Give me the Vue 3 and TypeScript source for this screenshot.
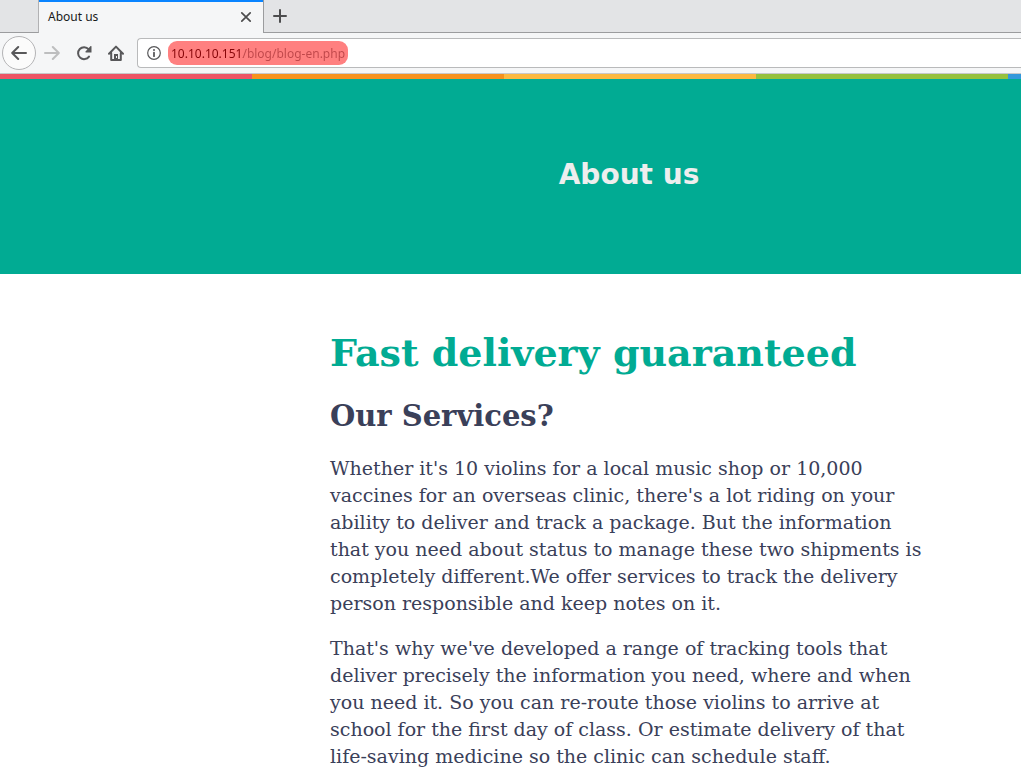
<script setup lang="ts">
import { ref } from 'vue'

const address = ref('10.10.10.151/blog/blog-en.php')
const stripes: string[] = ['red', 'orange', 'yellow', 'green', 'blue']
const paragraphs: string[] = [
  "Whether it's 10 violins for a local music shop or 10,000 vaccines for an overseas clinic, there's a lot riding on your ability to deliver and track a package. But the information that you need about status to manage these two shipments is completely different.We offer services to track the delivery person responsible and keep notes on it.",
  "That's why we've developed a range of tracking tools that deliver precisely the information you need, where and when you need it. So you can re-route those violins to arrive at school for the first day of class. Or estimate delivery of that life-saving medicine so the clinic can schedule staff.",
]
</script>

<template>
  <div class="browser">
    <div class="tabs">
      <div class="tab-gap"></div>
      <div class="tab">
        <span class="tab-title">About us</span>
        <button class="tab-close" type="button" aria-label="Close tab">
          <svg width="12" height="12" viewBox="0 0 12 12"><path d="M1.8 1.8l8.4 8.4M10.2 1.8l-8.4 8.4" fill="none" stroke="#4c4c4d" stroke-width="1.7" stroke-linecap="round" /></svg>
        </button>
      </div>
      <div class="tab-rest">
        <button class="tab-new" type="button" aria-label="New tab">
          <svg width="14" height="14" viewBox="0 0 14 14"><path d="M7 1v12M1 7h12" fill="none" stroke="#4c4c4d" stroke-width="2" stroke-linecap="round" /></svg>
        </button>
      </div>
    </div>

    <div class="toolbar">
      <button class="nav back" type="button" aria-label="Back">
        <svg width="16" height="16" viewBox="0 0 16 16"><path d="M15 8H1.5M7.2 2L1.2 8l6 6" fill="none" stroke="#58585a" stroke-width="2" stroke-linecap="round" stroke-linejoin="round" /></svg>
      </button>
      <button class="nav" type="button" aria-label="Forward" disabled>
        <svg width="16" height="16" viewBox="0 0 16 16"><path d="M1 8h13.5M8.8 2l6 6-6 6" fill="none" stroke="#bdbebf" stroke-width="2" stroke-linecap="round" stroke-linejoin="round" /></svg>
      </button>
      <button class="nav" type="button" aria-label="Reload">
        <svg width="16" height="16" viewBox="0 0 16 16">
          <path d="M13 11.6A6 6 0 1 1 12.6 4.2" fill="none" stroke="#58585a" stroke-width="2" stroke-linecap="round" />
          <path d="M14.6 1.1a.6.6 0 0 1 .9.5V7.4H9.9a.6.6 0 0 1-.4-1z" fill="#58585a" />
        </svg>
      </button>
      <button class="nav" type="button" aria-label="Home">
        <svg width="16" height="16" viewBox="0 0 16 16">
          <path d="M1 8.8L8 1.6l7 7.2M3.2 8v7h9.6V8" fill="none" stroke="#58585a" stroke-width="2" stroke-linecap="round" stroke-linejoin="round" />
          <path d="M6 15V9h4v6z" fill="#58585a" />
          <path d="M8 11h1v2H8z" fill="#f5f6f7" />
        </svg>
      </button>
      <div class="urlbar">
        <svg width="14" height="14" viewBox="0 0 14 14">
          <circle cx="7" cy="7" r="6.3" fill="none" stroke="#58585a" stroke-width="1.2" />
          <path d="M7 6.7v3.5" stroke="#58585a" stroke-width="1.8" stroke-linecap="round" />
          <circle cx="7" cy="4" r="1" fill="#58585a" />
        </svg>
        <label class="address">
          <input v-model="address" class="address-input" type="text" aria-label="Address" spellcheck="false" />
        </label>
      </div>
    </div>

    <div class="stripes">
      <div v-for="stripe in stripes" :key="stripe" class="stripe" :class="stripe"></div>
    </div>

    <header class="banner">
      <h2 class="banner-title">About us</h2>
    </header>

    <main class="article">
      <h1 class="headline">Fast delivery guaranteed</h1>
      <h2 class="subhead">Our Services?</h2>
      <p v-for="(text, index) in paragraphs" :key="index" class="copy">{{ text }}</p>
    </main>
  </div>
</template>

<style>
body {
  margin: 0;
  background: #fff;
}
</style>

<style scoped>
.browser {
  height: 100vh;
  overflow: hidden;
  font-family: 'Noto Sans', sans-serif;
}
button {
  display: flex;
  align-items: center;
  justify-content: center;
  padding: 0;
  border: 0;
  background: none;
}
.tabs {
  display: flex;
  height: 33px;
  background: #e3e4e6;
}
.tab-gap {
  box-sizing: border-box;
  width: 39px;
  border-right: 1px solid #b1b1b3;
  border-bottom: 1px solid #9b9c9e;
}
.tab {
  box-sizing: border-box;
  display: flex;
  align-items: center;
  justify-content: space-between;
  width: 224px;
  padding: 0 10px 2px 9px;
  border-top: 2px solid #0a84ff;
  background: #f5f6f7;
}
.tab-title {
  font-size: 12px;
  line-height: 16px;
  color: #18191a;
}
.tab-close {
  width: 14px;
  height: 14px;
}
.tab-rest {
  box-sizing: border-box;
  flex: 1;
  display: flex;
  align-items: center;
  padding-left: 9px;
  border-left: 1px solid #9b9c9e;
  border-bottom: 1px solid #9b9c9e;
}
.tab-new {
  width: 14px;
  height: 14px;
}
.toolbar {
  display: flex;
  align-items: center;
  height: 40px;
  padding-left: 2px;
  border-bottom: 1px solid #c8c8ca;
  background: #f5f6f7;
}
.nav {
  flex: none;
  width: 32px;
  height: 32px;
}
.back {
  box-sizing: border-box;
  width: 34px;
  height: 34px;
  border: 1px solid #b4b4b6;
  border-radius: 50%;
  background: #fbfbfb;
}
.urlbar {
  box-sizing: border-box;
  flex: 1;
  display: flex;
  align-items: center;
  gap: 7px;
  height: 30px;
  margin-left: 5px;
  padding-left: 9px;
  border: 1px solid #b9babb;
  border-right: 0;
  border-radius: 4px 0 0 4px;
  background: #fff;
}
.address {
  display: flex;
  width: 180px;
  height: 24px;
  border-radius: 9px;
  background: #ff8080;
}
.address-input {
  width: 100%;
  padding: 1px 3px 0;
  border: 0;
  outline: 0;
  background: linear-gradient(to right, #860508 75px, #c0474a 75px);
  background-clip: text;
  color: transparent;
  font: 12px/16px 'Noto Sans', sans-serif;
}
.stripes {
  display: flex;
  height: 5px;
}
.stripe {
  flex: 0 0 252px;
}
.red {
  background: #ed5565;
}
.orange {
  background: #f6921e;
}
.yellow {
  background: #fcb941;
}
.green {
  background: #96c13d;
}
.blue {
  background: #3498db;
}
.banner {
  padding: 78px 0 81px 237px;
  background: #01ab93;
  text-align: center;
}
.banner-title {
  margin: 0;
  font: bold 28px/36px 'DejaVu Sans', sans-serif;
  color: #eee;
}
.article {
  max-width: 600px;
  margin-left: 330px;
  padding-top: 56px;
  font-family: 'DejaVu Serif', serif;
  color: #3a4059;
}
.headline {
  margin: 0 0 20px;
  font-size: 38px;
  line-height: 46px;
  color: #01ab93;
}
.subhead {
  margin: 0 0 19px;
  font-size: 29px;
  line-height: 40px;
}
.copy {
  margin: 0 0 18px;
  font-size: 19px;
  line-height: 27px;
}
</style>
